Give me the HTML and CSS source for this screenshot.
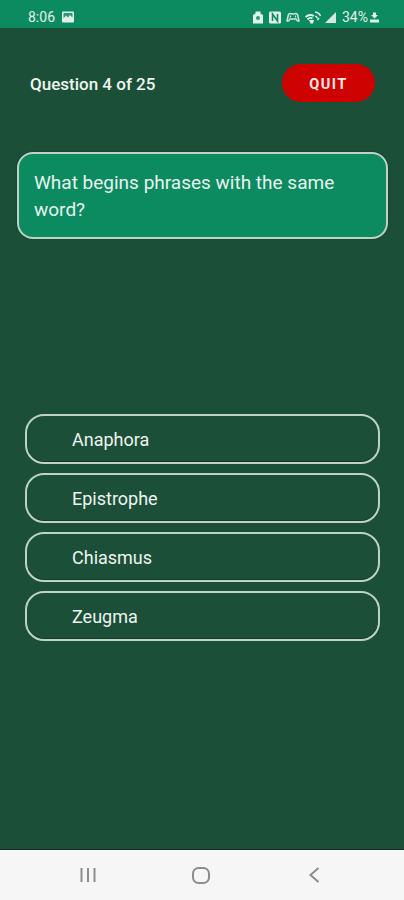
FILE: index.html
```html
<!DOCTYPE html>
<html>
	<head>
		<meta charset="utf-8" />
		<title>Quiz</title>
		<link rel="stylesheet" href="styles.css">
	</head>
	<body>
		<div class="phone">
			<div class="statusbar">
				<div class="status-left">
					<span>8:06</span>
					<svg class="ico" width="12" height="12" viewBox="0 0 12 12"><rect x="0" y="0.500" width="12" height="11" rx="1" fill="#e3f0ea"/><path d="M1.500 7.500 L4 4.500 L6 6.500 L8 4 L10.500 6.500 V2 H1.500 Z" fill="#2a9a74"/></svg>
				</div>
				<div class="status-right">
					<svg class="ico" width="10" height="13" viewBox="0 0 10 13"><path d="M2.500 0.500 H7.500 V2.500 L10 4 V12.500 H0 V4 L2.500 2.500 Z" fill="#e3f0ea"/><circle cx="5" cy="7" r="2" fill="#2a9a74"/></svg>
					<svg class="ico gap-n" width="12" height="13" viewBox="0 0 12 13"><rect x="0" y="0.500" width="12" height="12" rx="1.500" fill="#e3f0ea"/><path d="M3.500 10 V3 L8.500 10 V3" fill="none" stroke="#0c8a60" stroke-width="1.600"/></svg>
					<svg class="ico gap-c" width="14" height="12" viewBox="0 0 14 12"><path d="M1 10 L2.500 3.500 Q4 2 5.500 3 H8.500 Q10 2 11.500 3.500 L13 10 Q11.500 11 10 8 H4 Q2.500 11 1 10 Z" fill="none" stroke="#cfe5db" stroke-width="1.500"/><path d="M4.500 4.500 V6.500 M9.500 4.500 V6.500" stroke="#cfe5db" stroke-width="1.200"/></svg>
					<svg class="ico gap-w" width="16" height="13" viewBox="0 0 16 13"><path d="M0.500 6 Q4.500 2.500 9 5 M2.500 8.500 Q5 6 7.500 7.500" fill="none" stroke="#e3f0ea" stroke-width="1.800"/><path d="M4 9 H9 L8 12.500 H5.500 Z" fill="#e3f0ea"/><path d="M10 1 Q14 1.500 15.500 5 M10.500 5 L12.500 7 M12.500 9 L14 7" fill="none" stroke="#e3f0ea" stroke-width="1.500"/></svg>
					<svg class="ico gap-s" width="11" height="11" viewBox="0 0 11 11"><path d="M0 11 H11 V0 Z" fill="#d5e8df"/></svg>
					<span class="battery-text">34%</span>
					<svg class="ico" width="9" height="11" viewBox="0 0 9 11"><path d="M3 0.500 H6 V3 H8 L4.500 6.500 L1 3 H3 Z" fill="#e3f0ea"/><rect x="0" y="7.500" width="9" height="3" fill="#e3f0ea"/></svg>
				</div>
			</div>

			<div class="screen">
				<div class="topbar">
					<span class="counter">Question 4 of 25</span>
					<button class="quit">QUIT</button>
				</div>

				<div class="question">What begins phrases with the same word?</div>

				<ul class="answers">
					<li>Anaphora</li>
					<li>Epistrophe</li>
					<li>Chiasmus</li>
					<li>Zeugma</li>
				</ul>
			</div>

			<div class="navbar">
				<svg width="18" height="16" viewBox="0 0 18 16"><path d="M2.500 1 V15 M9 1 V15 M15.500 1 V15" stroke="#8d8d8d" stroke-width="2" fill="none"/></svg>
				<svg width="18" height="17" viewBox="0 0 18 17"><rect x="1" y="1" width="16" height="15" rx="5.500" stroke="#8d8d8d" stroke-width="2" fill="none"/></svg>
				<svg width="16" height="16" viewBox="0 0 16 16"><path d="M13.500 1 L5.500 8 L13.500 15" stroke="#8d8d8d" stroke-width="2" fill="none"/></svg>
			</div>
		</div>
	</body>
</html>
```

FILE: styles.css
```css
* {
	margin: 0;
	padding: 0;
	box-sizing: border-box;
}
body {
	font-family: Roboto, "Liberation Sans", sans-serif;
	background: #1c4f37;
}
li {
	list-style: none;
}
.phone {
	width: 404px;
	height: 900px;
	display: flex;
	flex-direction: column;
}
.statusbar {
	height: 28px;
	flex: none;
	padding: 6px 25px 0 28px;
	background: #0c8a60;
	color: #e3f0ea;
	font-size: 14px;
	display: flex;
	justify-content: space-between;
	align-items: center;
}
.status-left,
.status-right {
	display: flex;
	align-items: center;
}
.status-left {
	gap: 7px;
}
.status-right {
	gap: 2px;
}
.gap-n {
	margin-left: 4px;
}
.gap-c {
	margin-left: 3px;
}
.gap-w {
	margin-left: 3px;
}
.gap-s {
	margin-left: 2px;
}
.battery-text {
	margin-left: 4px;
}
.screen {
	flex: 1;
	background: #1c4f37;
	padding: 0 17px;
	border-bottom: 1px solid #0d2f20;
}
.topbar {
	height: 38px;
	margin-top: 36px;
	padding: 0 12px 0 13px;
	display: flex;
	justify-content: space-between;
	align-items: center;
}
.counter {
	padding-top: 1px;
	color: #eef5f1;
	font-size: 17px;
	font-weight: 500;
}
.quit {
	width: 93px;
	height: 38px;
	padding-top: 2px;
	border: none;
	border-radius: 19px;
	background: #cf0202;
	color: #f6e6e6;
	font-family: Roboto, "Liberation Sans", sans-serif;
	font-size: 14.500px;
	font-weight: 700;
	letter-spacing: 1.500px;
}
.question {
	margin-top: 50px;
	width: 371px;
	height: 87px;
	padding: 15px 15px 0;
	border: 2px solid #bed2c6;
	border-radius: 16px;
	background: #0c8a60;
	box-shadow: 0 0 2px rgba(0, 0, 0, 0.35);
	color: #e8f3ee;
	font-size: 19px;
	line-height: 27px;
}
.answers {
	margin-top: 175px;
	padding: 0 7px 0 8px;
	display: flex;
	flex-direction: column;
	gap: 9px;
}
.answers li {
	height: 50px;
	padding-left: 45px;
	border: 2px solid #bed2c6;
	border-radius: 19px;
	box-shadow: inset 0 -1px 0 #123a28;
	color: #eef5f1;
	font-size: 18px;
	display: flex;
	align-items: center;
}
.navbar {
	height: 50px;
	flex: none;
	padding: 0 83px 0 79px;
	background: #f6f6f6;
	display: flex;
	justify-content: space-between;
	align-items: center;
}
```
